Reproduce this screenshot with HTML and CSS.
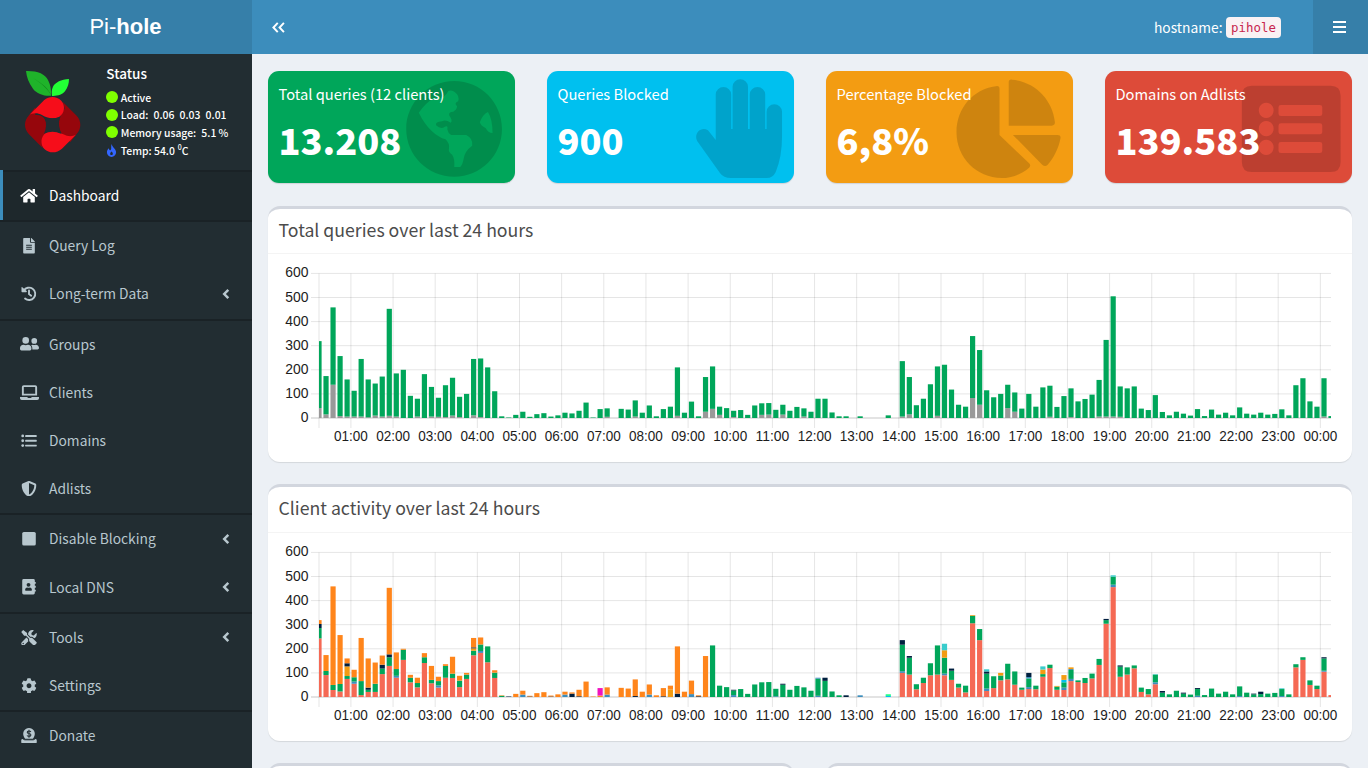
FILE: index.html
```html
<!DOCTYPE html>
<html lang="en">
<head>
<meta charset="utf-8">
<title>Pi-hole</title>
<link rel="stylesheet" href="styles.css">
</head>
<body>
<header class="topbar">
  <div class="brand">Pi-<b>hole</b></div>
  <nav class="navbar">
    <svg class="collapse" viewBox="0 0 12 10"><path d="M5.3 .8 1.3 5l4 4.2M11 .8 7 5l4 4.2" /></svg>
    <div class="host"><span>hostname:</span><code>pihole</code></div>
    <div class="burger"><i></i><i></i><i></i></div>
  </nav>
</header>
<div class="shell">
  <aside class="sidebar">
    <section class="status">
      <svg class="logo" viewBox="66 204 184 260">
        <path fill="#1fb32a" d="M78 213C112 212 136 222 144 240C153 258 154 273 153 287C135 289 110 282 99 266C86 248 80 232 78 213Z"/>
        <path fill="#22ff35" d="M207 237C184 238 166 247 159 260C154 270 155 279 156 288C172 289 188 283 195 274C204 262 207 250 207 237Z"/>
        <path fill="#117f1b" d="M100 235C127 250 146 267 155 288C144 268 125 250 100 235Z"/>
        <path fill="#96060c" d="M106 322L87 346C71 362 71 387 87 403L128 444C121 423 129 407 143 396C141 362 133 342 106 345Z"/>
        <path fill="#96060c" d="M188 305L230 347C245 363 245 386 230 402L211 426C186 405 177 395 177 370C178 350 187 337 194 325Z"/>
        <path fill="#f60d1a" d="M86 347L132 301C148 287 169 288 184 302C197 316 194 340 178 350C160 361 137 352 126 345C112 337 94 339 86 347Z"/>
        <path fill="#f60d1a" d="M230 402L186 446C170 460 149 461 133 447C120 434 122 410 137 399C155 386 176 397 190 403C205 411 222 410 230 402Z"/>
        <path fill="#222d32" d="M134 353Q158 358 181 351Q171 372 183 401Q158 390 132 401Q143 376 134 353Z"/>
      </svg>
      <div class="facts">
        <strong>Status</strong>
        <p><i class="dot"></i>Active</p>
        <p><i class="dot"></i>Load:&ensp;<span class="nums">0.06&ensp;0.03&ensp;0.01</span></p>
        <p><i class="dot"></i>Memory usage:&ensp;5.1&thinsp;%</p>
        <p><svg class="flame" viewBox="0 0 12 14"><path d="M6.2 0C6.8 4 11 5.2 11 9a5 5 0 0 1-10 0C1 7 2 5.8 3 4.6 3.3 6.2 4 6.8 4.8 6.8 6.5 6 5 3 6.2 0ZM6 8c-1.8 1.5-2 4 0 4s2-2.500 0-4Z"/></svg>Temp: 54.0 <sup>0</sup>C</p>
      </div>
    </section>
    <ul class="menu" id="menu">
      <li class="item active sep"><svg class="ico" viewBox="0 0 576 512"><path d="M280.37 148.26L96 300.11V464a16 16 0 0 0 16 16l112.06-.29a16 16 0 0 0 15.92-16V368a16 16 0 0 1 16-16h64a16 16 0 0 1 16 16v95.64a16 16 0 0 0 16 16.05L464 480a16 16 0 0 0 16-16V300L295.67 148.26a12.19 12.19 0 0 0-15.3 0zM571.6 251.47L488 182.56V44.05a12 12 0 0 0-12-12h-56a12 12 0 0 0-12 12v72.61L318.47 43a48 48 0 0 0-61 0L4.34 251.47a12 12 0 0 0-1.6 16.9l25.5 31A12 12 0 0 0 45.15 301l235.22-193.74a12.19 12.19 0 0 1 15.3 0L530.9 301a12 12 0 0 0 16.9-1.6l25.5-31a12 12 0 0 0-1.7-16.93z"/></svg><span>Dashboard</span></li>
      <li class="item sep"><svg class="ico" viewBox="0 0 384 512"><path d="M224 136V0H24C10.7 0 0 10.7 0 24v464c0 13.3 10.7 24 24 24h336c13.3 0 24-10.7 24-24V160H248c-13.2 0-24-10.8-24-24zm64 236c0 6.6-5.4 12-12 12H108c-6.6 0-12-5.4-12-12v-8c0-6.6 5.4-12 12-12h168c6.6 0 12 5.4 12 12v8zm0-64c0 6.6-5.4 12-12 12H108c-6.6 0-12-5.4-12-12v-8c0-6.6 5.4-12 12-12h168c6.6 0 12 5.4 12 12v8zm0-72v8c0 6.6-5.4 12-12 12H108c-6.6 0-12-5.4-12-12v-8c0-6.6 5.4-12 12-12h168c6.6 0 12 5.4 12 12zm96-114.1v6.1H256V0h6.1c6.4 0 12.5 2.5 17 7l97.9 98c4.5 4.5 7 10.6 7 16.9z"/></svg><span>Query Log</span></li>
      <li class="item"><svg class="ico" viewBox="0 0 512 512"><path d="M8 50v130c0 15 9 24 24 24h130c22 0 32-26 17-41L25 34C17 26 8 34 8 50z"/><path class="line" d="M85 150A204 204 0 1 1 125 413M256 145v122l72 55"/></svg><span>Long-term Data</span><svg class="angle" viewBox="0 0 8 12"><path d="M6.300 1.800 2.200 6l4.100 4.200"/></svg></li>
      <li class="item sep"><svg class="ico wide" viewBox="0 0 640 512"><circle cx="192" cy="144" r="112"/><path d="M0 432v-32c0-70 50-112 115-112q77 32 154 0c65 0 115 42 115 112v32q0 48-48 48H48q-48 0-48-48z"/><circle cx="480" cy="160" r="96"/><path d="M416 448h176q48 0 48-48c0-64-45-112-112-112q-48 16-96 0-32 0-58 18c32 35 46 72 42 142z"/></svg><span>Groups</span></li>
      <li class="item"><svg class="ico wide" viewBox="0 0 640 512"><path fill-rule="evenodd" d="M512 0H128Q64 0 64 64v288h512V64q0-64-64-64zM128 64h384v224H128z"/><path d="M0 400h245q8 32 38 32h74q30 0 38-32h245v40q0 56-60 56H60q-60 0-60-56z"/></svg><span>Clients</span></li>
      <li class="item"><svg class="ico" viewBox="0 0 512 512"><circle cx="48" cy="96" r="46"/><circle cx="48" cy="256" r="46"/><circle cx="48" cy="416" r="46"/><rect x="128" y="64" width="384" height="64" rx="16"/><rect x="128" y="224" width="384" height="64" rx="16"/><rect x="128" y="384" width="384" height="64" rx="16"/></svg><span>Domains</span></li>
      <li class="item"><svg class="ico" viewBox="0 0 512 512"><path d="M466.5 83.7l-192-80a48.15 48.15 0 0 0-36.9 0l-192 80C27.7 91.1 16 108.6 16 128c0 198.5 114.5 335.7 221.500 380.3 11.8 4.9 25.1 4.9 36.9 0C360.1 472.6 496 349.3 496 128c0-19.4-11.7-36.9-29.5-44.3zM256.1 446.3l-.1-381 175.9 73.3c-3.3 151.4-82.1 261.1-175.8 307.7z"/></svg><span>Adlists</span></li>
      <li class="item sep"><svg class="ico" viewBox="0 0 512 512"><rect x="32" y="32" width="448" height="448" rx="52"/></svg><span>Disable Blocking</span><svg class="angle" viewBox="0 0 8 12"><path d="M6.300 1.800 2.200 6l4.100 4.200"/></svg></li>
      <li class="item"><svg class="ico" viewBox="0 0 512 512"><path fill-rule="evenodd" d="M80 0h320q48 0 48 48v48h22q10 0 10 10v44q0 10-10 10h-22v64h22q10 0 10 10v44q0 10-10 10h-22v64h22q10 0 10 10v44q0 10-10 10h-22v48q0 48-48 48H80q-48 0-48-48V48Q32 0 80 0zM240 128a64 64 0 1 0 0 128 64 64 0 1 0 0-128zM128 360q0 24 22 24h180q22 0 22-24c0-50-28-82-68-82q-44 16-88 0c-40 0-68 32-68 82z"/></svg><span>Local DNS</span><svg class="angle" viewBox="0 0 8 12"><path d="M6.300 1.800 2.200 6l4.100 4.200"/></svg></li>
      <li class="item sep"><svg class="ico" viewBox="0 0 512 512"><path d="M501.1 395.7L384 278.6c-23.1-23.1-57.6-27.6-85.4-13.9L192 158.1V96L64 0 0 64l96 128h62.1l106.600 106.6c-13.6 27.8-9.2 62.3 13.9 85.4l117.1 117.1c14.6 14.6 38.2 14.6 52.7 0l52.7-52.7c14.5-14.6 14.5-38.2 0-52.7zM331.7 225c28.3 0 54.9 11 74.9 31l19.4 19.4c15.8-6.9 30.8-16.5 43.8-29.5 37.1-37.1 49.7-89.3 37.9-136.7-2.2-9-13.500-12.1-20.1-5.5l-74.4 74.4-67.9-11.3L334 98.9l74.4-74.4c6.6-6.6 3.4-17.9-5.7-20.2-47.4-11.7-99.6.9-136.6 37.9-28.5 28.5-41.9 66.1-41.2 103.6l82.1 82.1c8.1-1.9 16.5-2.9 24.7-2.9zm-103.9 82l-56.7-56.7L18.7 402.8c-25 25-25 65.5 0 90.5s65.5 25 90.5 0l123.6-123.6c-7.6-19.9-9.9-41.6-5-62.7zM64 472c-13.2 0-24-10.8-24-24 0-13.3 10.7-24 24-24s24 10.7 24 24c0 13.2-10.7 24-24 24z"/></svg><span>Tools</span><svg class="angle" viewBox="0 0 8 12"><path d="M6.300 1.800 2.200 6l4.100 4.200"/></svg></li>
      <li class="item"><svg class="ico" viewBox="0 0 512 512"><path d="M487.4 315.7l-42.6-24.6c4.3-23.2 4.3-47 0-70.2l42.6-24.6c4.9-2.8 7.1-8.6 5.5-14-11.1-35.6-30-67.8-54.7-94.6-3.8-4.1-10-5.1-14.8-2.3L380.8 110c-17.9-15.4-38.5-27.3-60.8-35.1V25.8c0-5.6-3.9-10.5-9.4-11.7-36.7-8.2-74.3-7.8-109.2 0-5.5 1.2-9.4 6.1-9.4 11.7V75c-22.2 7.9-42.8 19.8-60.8 35.1L88.7 85.5c-4.9-2.8-11-1.9-14.8 2.3-24.7 26.7-43.6 58.9-54.7 94.6-1.7 5.4.6 11.2 5.5 14L67.3 221c-4.3 23.2-4.3 47 0 70.2l-42.6 24.6c-4.9 2.8-7.1 8.6-5.500 14 11.1 35.6 30 67.8 54.7 94.6 3.8 4.1 10 5.1 14.8 2.3l42.6-24.6c17.9 15.4 38.5 27.3 60.8 35.1v49.2c0 5.6 3.9 10.5 9.4 11.7 36.7 8.2 74.3 7.8 109.2 0 5.5-1.2 9.4-6.1 9.4-11.7v-49.2c22.2-7.9 42.8-19.8 60.8-35.1l42.6 24.6c4.9 2.8 11 1.9 14.8-2.3 24.7-26.7 43.6-58.9 54.7-94.6 1.5-5.5-.7-11.3-5.6-14.1zM256 336c-44.1 0-80-35.9-80-80s35.9-80 80-80 80 35.9 80 80-35.9 80-80 80z"/></svg><span>Settings</span></li>
      <li class="item sep"><svg class="ico" viewBox="0 0 512 512"><path d="M256 0a192 192 0 0 0-168 285q12 35 40 67h256q28-32 40-67A192 192 0 0 0 256 0z"/><path d="M50 360Q0 360 0 405v60q0 47 45 47h422q45 0 45-47v-60q0-45-50-45l-18 32H68z"/><path class="coin" d="M320 125q-24-28-64-28c-78 0-78 78 0 86 86 10 82 94 0 94q-44 0-66-30M256 60v260"/><path class="slot" d="M100 392h312"/></svg><span>Donate</span></li>
    </ul>
  </aside>
  <main class="content">
    <section class="tiles">
      <article class="tile green">
        <svg class="art" viewBox="0 0 246.500 112.500"><g transform="scale(.3508 .3333) translate(-23 -33)"><path fill-rule="evenodd" d="M554 63C630 63 690 128 690 207S630 350 554 350 417 286 417 207 478 63 554 63ZM537 93Q547 88 556 97Q570 108 565 124Q552 130 562 139Q561 150 551 155Q536 156 540 167Q550 181 544 188Q529 178 519 184Q499 186 502 196Q516 209 527 200Q537 195 534 208Q536 220 545 225H588Q608 235 605 257Q584 273 581 295Q578 314 571 321H554Q556 296 548 284Q536 277 539 265Q541 250 529 238C504 230 475 206 453 158Q474 127 496 115Q525 120 537 93ZM650 156Q663 178 663 219Q650 219 644 205Q629 197 627 187Q635 163 650 156Z"/></g></svg>
        <p>Total queries (12 clients)</p><h3>13.208</h3>
      </article>
      <article class="tile aqua">
        <svg class="art" viewBox="0 0 246.500 112.500"><g transform="scale(.3508 .3333) translate(-819 -33)"><path d="M1300 240V103a22 22 0 0 1 44 0V207H1348V80a22 22 0 0 1 44 0V207H1397V103a22 22 0 0 1 44 0V207H1445V155a22 22 0 0 1 44 0V230Q1489 290 1471 336Q1463 354 1445 354H1343Q1322 354 1312 339L1247 243C1236 220 1259 197 1278 211Z"/></g></svg>
        <p>Queries Blocked</p><h3>900</h3>
      </article>
      <article class="tile yellow">
        <svg class="art" viewBox="0 0 246.500 112.500"><g transform="scale(.3527 .3333) translate(-32 -213)"><path d="M513 259Q524 256 524 267V405L608 490Q614 496 608 503C585 524 557 534 530 534C458 534 402 472 402 397C402 325 449 268 513 259ZM550 247Q550 237 560 239C625 245 675 300 681 366Q682 376 672 377H550ZM562 405H688Q698 405 697 414C692 444 678 474 660 495Q653 502 645 494Z"/></g></svg>
        <p>Percentage Blocked</p><h3>6,8%</h3>
      </article>
      <article class="tile red">
        <svg class="art" viewBox="0 0 246.500 112.500"><g transform="scale(.3527 .3333) translate(-823 -213)"><path fill-rule="evenodd" d="M1239 257H1463Q1491 257 1491 287V486Q1491 516 1463 516H1239Q1211 516 1211 486V287Q1211 257 1239 257ZM1280 308a21 23 0 1 0 .1 0ZM1280 363a21 23 0 1 0 .1 0ZM1280 419a21 23 0 1 0 .1 0ZM1322 315Q1315 315 1315 322V341Q1315 348 1322 348H1432Q1439 348 1439 341V322Q1439 315 1432 315ZM1322 370Q1315 370 1315 377V396Q1315 403 1322 403H1432Q1439 403 1439 396V377Q1439 370 1432 370ZM1322 426Q1315 426 1315 433V452Q1315 459 1322 459H1432Q1439 459 1439 452V433Q1439 426 1432 426Z"/></g></svg>
        <p>Domains on Adlists</p><h3>139.583</h3>
      </article>
    </section>
    <section class="card"><h2>Total queries over last 24 hours</h2><svg class="chart" id="queries" viewBox="0 0 1084 208"></svg></section>
    <section class="card"><h2>Client activity over last 24 hours</h2><svg class="chart" id="clients" viewBox="0 0 1084 208"></svg></section>
    <section class="halves"><div class="card half"></div><div class="card half"></div></section>
  </main>
</div>
<script src="charts.js"></script>
</body>
</html>
```
FILE: styles.css
```css
* { box-sizing: border-box; }
body {
  margin: 0;
  height: 768px;
  overflow: hidden;
  background: #ecf0f5;
  color: #fff;
  font-family: "Noto Sans CJK SC", "Open Sans", sans-serif;
  font-size: 13.800px;
}
p, h2, h3, ul { margin: 0; padding: 0; }
.topbar { display: flex; height: 54px; }
.brand {
  width: 252px;
  line-height: 54px;
  text-align: center;
  padding-right: 1px;
  background: #367fa9;
  font-family: "Liberation Sans", Arial, sans-serif;
  font-size: 22px;
}
.navbar { flex: 1; display: flex; align-items: center; background: #3c8dbc; padding-left: 20px; }
.collapse { width: 13px; height: 11px; margin-right: auto; fill: none; stroke: #fff; stroke-width: 1.8; }
.host { display: flex; align-items: center; gap: 3.500px; margin-right: 32px; line-height: 20px; }
.host code {
  width: 55px;
  height: 21px;
  line-height: 21px;
  text-align: center;
  border-radius: 4px;
  background: #f9f2f4;
  color: #c7254e;
  font-family: "DejaVu Sans Mono", monospace;
  font-size: 12.400px;
}
.burger { width: 55px; height: 54px; padding-right: 2px; background: #367fa9; display: flex; flex-direction: column; align-items: center; justify-content: center; gap: 3px; }
.burger i { width: 13px; height: 2px; background: #fff; }
.shell { display: flex; height: 714px; overflow: hidden; }
.sidebar { width: 252px; background: #222d32; }
.status { display: flex; height: 116px; padding: 14px 0 0 22px; }
.logo { width: 61.300px; height: 86.700px; }
.facts { padding-left: 23px; font-size: 10.400px; }
.facts strong { display: block; font-size: 13.500px; line-height: 20px; height: 21px; margin-top: -5.500px; margin-bottom: 5px; font-weight: 500; }
.facts p { display: flex; align-items: center; height: 17.600px; line-height: 17px; white-space: nowrap; font-weight: 500; }
.facts sup { font-size: 7px; line-height: 7px; margin: -5px 0 0 3px; }
.dot { width: 12px; height: 12px; border-radius: 50%; background: #7fff00; margin-right: 2.500px; }
.flame { width: 11px; height: 13px; fill: #3366ff; fill-rule: evenodd; margin-right: 3.500px; }
.menu { list-style: none; }
.item { display: flex; align-items: center; height: 48.200px; padding: 0 21px 0 17px; color: #b8c7ce; border-left: 3px solid transparent; }
.sep { height: 50.200px; background: linear-gradient(#1a2226 2px, transparent 2px); padding-top: 2px; }
.active { background: #1e282c; color: #fff; border-left-color: #3c8dbc; box-shadow: inset 0 2px #1a2226; }
.item span { margin-left: 11px; margin-top: -2px; line-height: 20px; flex: 1; }
.ico { width: 18px; height: 15.500px; margin-top: -1px; fill: currentColor; }
.wide { width: 19px; margin-right: -1px; }
.line { fill: none; stroke: currentColor; stroke-width: 62; stroke-linecap: round; }
.coin { fill: none; stroke: #222d32; stroke-width: 36; }
.slot { fill: none; stroke: #222d32; stroke-width: 28; }
.angle { width: 8px; height: 12px; fill: none; stroke: currentColor; stroke-width: 2.500; margin-right: 1px; margin-top: -1px; }
.content { flex: 1; padding: 17px 16px 0; overflow: hidden; }
.tiles { display: grid; grid-template-columns: repeat(4, 246.500px); column-gap: 32.500px; height: 112px; margin-bottom: 22.500px; }
.tile { position: relative; border-radius: 11px; padding: 12px 10.500px; box-shadow: 0 1px 1px rgba(0,0,0,.12); }
.tile p { position: relative; line-height: 22px; font-size: 14.700px; white-space: nowrap; }
.tile h3 { position: relative; font-size: 36.200px; line-height: 44px; margin-top: 12px; font-weight: 900; }
.art { position: absolute; left: 0; top: 0; width: 246.500px; height: 112.500px; fill: rgba(0,0,0,.15); }
.green { background: #00a65a; }
.aqua { background: #00c0ef; }
.yellow { background: #f39c12; }
.red { background: #dd4b39; }
.card { height: 256.500px; margin-bottom: 22px; background: #fff; border-top: 3px solid #d2d6de; border-radius: 12px; box-shadow: 0 1px 1px rgba(0,0,0,.1); overflow: hidden; }
.card h2 { height: 45.500px; line-height: 41.500px; padding-left: 10.500px; border-bottom: 1px solid #f4f4f4; color: #4c4c4c; font-size: 17.700px; font-weight: 400; }
.chart { display: block; width: 1084px; height: 208px; }
.chart text { font: 13.900px "Liberation Sans", Arial, sans-serif; fill: #1c1c1c; }
.halves { display: grid; grid-template-columns: 1fr 1fr; gap: 32px; }
.half { height: 60px; margin-bottom: 0; }
```
FILE: charts.js
```js
const totals = [319,174,459,257,160,113,245,160,143,172,453,185,200,92,80,182,129,84,136,167,88,100,245,247,210,111,7,2,13,26,5,16,20,6,11,
22,19,30,64,2,37,40,0,38,35,73,22,52,7,37,47,210,22,68,7,170,214,47,41,30,33,13,52,61,62,34,55,30,46,40,26,80,80,23,7,7,0,7,0,0,0,
11,0,236,170,53,80,140,214,221,118,55,47,340,282,115,86,100,138,106,39,100,47,127,134,46,91,123,69,79,97,158,324,505,131,123,131,39,33,
95,25,11,26,18,10,37,8,35,14,22,11,44,18,14,22,14,17,36,11,136,165,69,47,165,8];

const blocked = {0:41,1:15,2:138,3:8,4:6,5:6,6:6,7:3,8:10,9:6,10:9,11:6,14:6,16:6,17:5,18:4,19:10,20:4,22:11,23:4,41:5,45:6,51:9,55:26,
56:38,57:13,59:4,63:13,64:14,66:14,69:6,83:6,84:15,88:9,93:83,94:55,98:41,99:26,104:5,107:4,111:6,112:6,113:6,114:5,143:6};

// Stack boundaries per interval; the last letter reaches the interval's total.
const stacks = {0:"r243 g286 n303 o",1:"r91 g108 o",2:"r29 g50 o",3:"r23 g54 o",4:"r75 g87 y127 n140 o",5:"r55 b64 g82 o",6:"r8 g66 o",
7:"r21 g30 n39 o",8:"r21 g55 o",9:"r95 g118 n134 o",10:"r129 g165 n177 o",11:"r80 b88 g116 o",12:"r154 g196 o",13:"r61 g80 o",
14:"r40 g58 o",15:"r141 g165 o",16:"r57 g71 o",17:"r39 b48 g66 o",18:"r80 g129 o",19:"r79 g97 o",20:"r41 g68 o",21:"r75 g93 o",
22:"r173 g192 y202 n206 o",23:"r183 b191 g218 o",24:"r144 g",25:"r79 g101 o",26:"g5 o",27:"n",29:"b10 o",30:"n2 o",33:"n2 o",
35:"b10 o",36:"n14 o",37:"n3 o",40:"o6 m",41:"b10 o",45:"n4 o",47:"b10 o",49:"n3 o",50:"y32 o",51:"n14 o",53:"b12 o",54:"n3 o",
59:"b8 g27 n",65:"b3 g",66:"g51 n",71:"b5 g76 b",72:"g67 n",75:"n",77:"b",81:"a5 l",83:"r100 b107 g217 n",84:"r93 g163 n",
85:"r32 g",86:"r58 g",87:"r90 g",88:"r93 g",89:"r90 b97 g163 y194 t",90:"r71 g109 n",91:"r39 g",92:"r19 g",93:"r306 g337 y",
94:"r236 g",95:"r25 b35 g97 n106 t",96:"r37 g",97:"r69 g89 y",98:"r73 g",99:"r51 g",100:"r30 g",101:"r33 b41 g77 b83 n",
102:"r32 g",103:"r84 g95 y114 t",104:"r120 g",105:"r30 g43 y",106:"r29 b39 g61 a71 y",107:"r66 b75 g112 b116 y",108:"r62 g",
109:"r58 g",110:"r77 g",111:"r133 g",112:"r304 g319 n",113:"r456 b466 g499 t",114:"r84 g126 n",115:"r93 g",116:"r119 g",
117:"r21 g",118:"r11 g",119:"r53 b61 g93 t",120:"g18 n",123:"g14 n",125:"b5 g33 n",131:"b4 g",133:"g11 n",134:"g12 n",
137:"b4 g33 t",139:"r123 g",140:"r154 g",141:"r50 g",142:"r33 g",143:"r105 b109 g160 n",144:"r"};

const colors = {r:"#f56954",g:"#00a65a",b:"#3c8dbc",n:"#001f3f",o:"#ff851b",y:"#f39c12",t:"#39cccc",m:"#f012be",a:"#00c0ef",l:"#01ff70",x:"#999"};
const LEFT = 51, RIGHT = 1063, BASE = 164, UNIT = 0.241, STEP = 7.028;

function draw(id, segments) {
  let out = "";
  for (let v = 0; v <= 600; v += 100) {
    const y = BASE - v * UNIT;
    out += `<path d="M43 ${y}H${RIGHT}" stroke="#000" stroke-opacity="${v ? .1 : .22}"/>`;
    out += `<text x="40.500" y="${y + 4}" text-anchor="end">${v}</text>`;
  }
  out += `<path d="M${LEFT} 19.500V174" stroke="#000" stroke-opacity=".1"/>`;
  for (let h = 1; h <= 24; h++) {
    const x = 82.900 + (h - 1) * 42.150;
    out += `<path d="M${x} 19.500V174" stroke="#000" stroke-opacity=".1"/>`;
    out += `<text x="${x}" y="186.500" text-anchor="middle" textLength="33.800" lengthAdjust="spacingAndGlyphs">${String(h % 24).padStart(2, "0")}:00</text>`;
  }
  totals.forEach((total, k) => {
    const c = LEFT + k * STEP;
    const x1 = Math.max(LEFT, c - 2.600), x2 = Math.min(RIGHT, c + 2.600);
    let from = 0;
    for (const [key, to] of segments(k, total)) {
      out += `<rect x="${x1}" y="${BASE - to * UNIT}" width="${x2 - x1}" height="${(to - from) * UNIT}" fill="${colors[key]}"/>`;
      from = to;
    }
  });
  document.getElementById(id).innerHTML = out;
}

draw("queries", (k, total) => [["x", blocked[k] || 0], ["g", total]]);
draw("clients", (k, total) => (stacks[k] || (k < 56 ? "o" : "g")).split(" ").map(s => [s[0], s.length > 1 ? +s.slice(1) : total]));
```
